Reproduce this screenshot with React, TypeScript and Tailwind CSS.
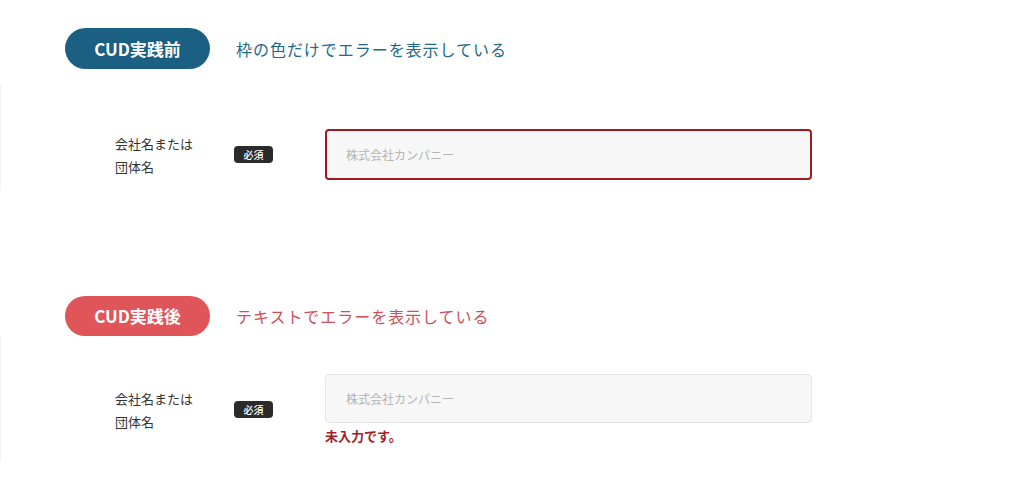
import React from "react";

const jp = { fontFamily: '"Noto Sans CJK JP", "Noto Sans", sans-serif' };

const Label = () => (
  <div className="w-[119px] text-[13px] leading-[23px] text-[#333]">
    会社名または
    <br />
    団体名
  </div>
);

const Required = () => (
  <span className="flex h-[17px] w-[39px] items-center justify-center rounded-[4px] bg-[#2b2b2b] text-[10px] font-medium text-white">
    必須
  </span>
);

const App = () => {
  return (
    <div className="min-h-[481px] w-[1024px] bg-white" style={jp}>
      {/* before: only the frame turns red */}
      <div className="pt-[28px]">
        <div className="flex items-center pl-[65px]">
          <div className="flex h-[41px] w-[145px] items-center justify-center rounded-full bg-[#1b5f82] text-[17px] font-bold text-white">
            CUD実践前
          </div>
          <p className="ml-[26px] text-[16px] tracking-[0.06em] text-[#23698c]">
            枠の色だけでエラーを表示している
          </p>
        </div>
        <div className="mt-[16px] border-l border-[#f3f3f3] pb-[10px] pt-[44px]">
          <div className="flex items-center pl-[114px]">
            <Label />
            <Required />
            <input
              readOnly
              placeholder="株式会社カンパニー"
              className="ml-[52px] h-[51px] w-[487px] rounded-[4px] border-2 border-[#9e1b22] bg-[#f7f7f7] px-[19px] text-[12px] outline-none placeholder:text-[#b5b5b5]"
            />
          </div>
        </div>
      </div>

      {/* after: message text under the field */}
      <div className="pt-[106px]">
        <div className="flex items-center pl-[65px]">
          <div className="flex h-[40px] w-[145px] items-center justify-center rounded-full bg-[#e0555a] text-[17px] font-bold text-white">
            CUD実践後
          </div>
          <p className="ml-[26px] text-[16px] tracking-[0.06em] text-[#cf4f58]">
            テキストでエラーを表示している
          </p>
        </div>
        <div className="border-l border-[#f3f3f3] pb-[16px] pt-[38px]">
          <div className="flex items-center pl-[114px]">
            <Label />
            <Required />
            <div className="ml-[52px] flex flex-col">
              <input
                readOnly
                placeholder="株式会社カンパニー"
                className="h-[49px] w-[487px] rounded-[4px] border border-[#e6e6e6] bg-[#f7f7f7] px-[20px] text-[12px] outline-none placeholder:text-[#b5b5b5]"
              />
              <p className="mt-[4px] text-[13px] font-bold leading-[18px] text-[#a3202b]">
                未入力です。
              </p>
            </div>
          </div>
        </div>
      </div>
    </div>
  );
};

export default App;
